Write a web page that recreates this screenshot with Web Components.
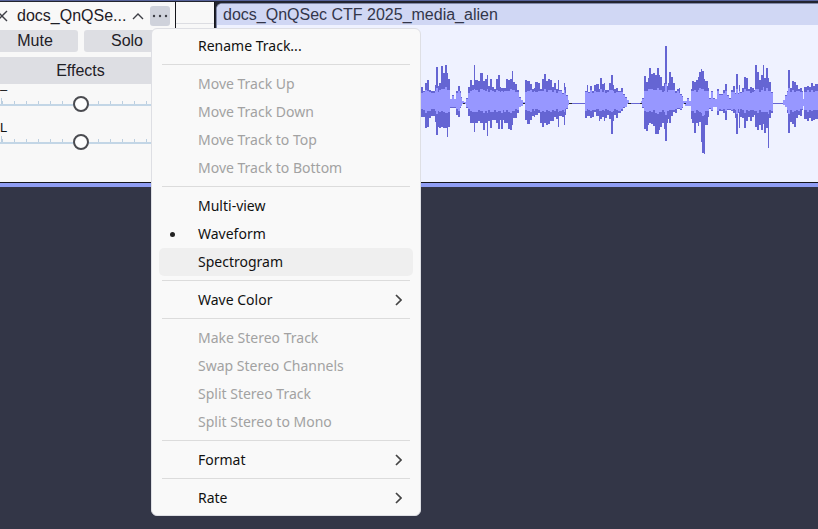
<!DOCTYPE html>
<html lang="en">
<head>
<meta charset="utf-8">
<title>Track menu</title>
<style>
  html, body { height: 100%; }
  body { margin: 0; background: #333647; overflow: hidden; font-family: "Liberation Sans", Arial, sans-serif; font-size: 16px; color: #1f2026; }
</style>
</head>
<body>
<audio-editor></audio-editor>
<script>
class ShadowElement extends HTMLElement {
  constructor() {
    super();
    this.attachShadow({ mode: "open" }).innerHTML = this.render();
  }
  render() { return ""; }
}

/* x, peak above the centre line, peak below it */
const PEAKS = `421,16,14 423,12,14 425,20,25 427,23,24 429,13,15 431,12,13 435,18,19 436,36,32 438,17,24 439,20,25 441,37,24 443,30,25 445,38,25 447,30,34 448,24,24 450,4,5 452,8,5 454,4,5 456,12,12 458,17,14 460,12,5 461,6,3 462,2,1 464,1,1 466,5,5 468,16,13 470,23,20 472,18,20 474,38,29 475,23,20 478,22,18 480,30,20 483,22,27 485,24,20 487,28,33 488,17,18 490,24,25 492,16,17 494,14,17 496,24,20 498,28,26 500,16,17 501,15,26 503,15,17 504,15,20 506,24,20 508,23,26 510,24,27 512,32,22 513,21,15 515,19,15 517,13,10 519,6,4 521,3,3 523,1,1 525,23,17 527,22,21 530,19,17 532,14,13 534,15,14 535,21,12 538,20,10 540,14,20 542,24,24 544,29,20 546,22,22 548,24,21 550,23,18 552,16,18 554,20,14 556,14,16 558,23,24 559,13,13 562,10,14 564,20,22 565,16,12 566,8,6 568,3,2 569,0,1 585,12,15 587,18,13 588,11,13 590,17,15 592,12,14 594,18,9 596,19,13 599,14,18 600,25,16 602,19,14 604,20,18 605,13,15 607,13,12 609,20,16 611,28,31 613,18,18 614,14,12 616,15,15 618,12,10 621,15,8 623,9,5 625,6,4 627,3,1 629,0,1 641,2,1 642,5,5 644,27,26 646,21,28 648,25,22 649,35,20 651,29,21 653,30,23 655,28,31 657,35,31 659,28,27 660,26,24 662,17,20 664,20,26 665,57,38 667,17,20 668,20,16 669,31,20 671,26,13 673,20,9 675,12,10 677,14,6 679,15,6 680,9,7 682,7,5 683,2,1 685,2,3 687,5,3 689,2,3 691,14,16 692,22,20 694,21,30 696,23,20 698,26,23 699,31,19 701,34,39 702,32,50 704,24,51 705,22,22 708,15,14 709,5,6 711,12,8 713,5,4 715,4,4 717,14,12 719,9,8 721,9,8 723,13,10 725,19,17 727,8,7 729,5,7 731,13,8 733,17,10 735,10,15 736,29,31 738,10,10 739,18,25 740,11,14 742,15,15 744,26,25 746,25,18 748,14,14 750,16,18 752,15,14 754,13,12 755,38,24 757,31,27 759,23,22 761,28,27 763,38,21 764,25,30 766,35,25 768,25,45 769,21,15 771,11,10 773,0,1 783,3,2 785,8,4 787,12,10 788,33,30 790,15,19 792,22,21 794,21,24 796,18,15 798,14,12 800,15,13 802,12,7 803,4,3 804,16,16 807,17,18 809,16,15 811,20,18 813,17,17 815,19,16`
  .split(/\s+/).map(p => p.split(",").map(Number));

customElements.define("wave-form", class extends ShadowElement {
  render() {
    const mid = 78, left = 217, right = 818;
    const outline = limit => {
      let top = `M${PEAKS[0][0] - left} ${mid}`, back = "";
      PEAKS.forEach(([x, up, down], i) => {
        const a = x - left, b = (PEAKS[i + 1] ? PEAKS[i + 1][0] : right) - left;
        top += `V${mid - limit(up, 9, i)}H${b}`;
        back = `H${b}V${mid + limit(down, 5, i)}H${a}` + back;
      });
      return top + back + "Z";
    };
    const loudness = (v, base, i) => v < 5 ? v : Math.min(v - 1, Math.round(base + v * 0.15 + (i * 7 % 5) / 2 - 1));
    return `
      <style>
        :host { display: block; background: #eff2ff; }
        svg { display: block; width: 100%; height: 157px; }
      </style>
      <svg viewBox="0 0 601 157" preserveAspectRatio="none" role="img" aria-label="Waveform">
        <path fill="#6565d3" d="${outline(v => v)}"/>
        <path fill="#9797ff" d="${outline(loudness)}"/>
        <path stroke="#6565d3" d="M352 78.500h16M411 78.500h13M556 78.500h10"/>
        <path stroke="#22232c" d="M246 78.500h2M306 78.500h2M352 78.500h3M411 78.500h3M423 78.500h2M467 78.500h2"/>
      </svg>`;
  }
});

customElements.define("audio-clip", class extends ShadowElement {
  render() {
    return `
      <style>
        :host { display: flex; flex-direction: column; min-width: 0; border-top: 1px solid #8088a8; border-left: 1px solid #8088a8; border-radius: 6px 0 0 0; overflow: hidden; background: #eff2ff; }
        header { height: 21px; line-height: 21px; padding-left: 6px; background: #d0d7f4; color: #33364a; white-space: nowrap; overflow: hidden; }
      </style>
      <header><slot name="name"></slot></header>
      <slot></slot>`;
  }
});

customElements.define("tick-slider", class extends ShadowElement {
  render() {
    const name = this.getAttribute("name") || "", mark = this.getAttribute("mark") || "";
    return `
      <style>
        :host { display: block; height: 38px; }
        label { display: block; height: 12px; font-size: 13px; line-height: 12px; color: #111; }
        .rail { height: 16px; background:
          linear-gradient(#c3d6e6, #c3d6e6) 0 8px / 100% 2px no-repeat,
          repeating-linear-gradient(90deg, transparent 0 1px, #bccfe0 1px 2px, transparent 2px 12px) 1px 5px / 100% 3px no-repeat,
          linear-gradient(#bccfe0, #bccfe0) 1px 2px / 1px 6px no-repeat; }
        input { appearance: none; display: block; margin: 0; width: 162px; height: 16px; background: none; }
        input::-webkit-slider-thumb { appearance: none; box-sizing: border-box; width: 16px; height: 16px; border: 2px solid #4a4b50; border-radius: 50%; background: #fdfdfd; }
      </style>
      <label for="s" aria-label="${name}">${mark}</label>
      <div class="rail"><input id="s" type="range" aria-label="${name}" min="0" max="100" value="50"></div>`;
  }
});

customElements.define("track-panel", class extends ShadowElement {
  render() {
    return `
      <style>
        :host { display: flex; flex-direction: column; background: #f8f8f8; overflow: hidden; }
        button { border: 0; padding: 0; margin: 0; font: inherit; color: inherit; background: none; }
        svg { display: block; fill: none; stroke: #3d3e45; }
        .title { display: flex; align-items: center; height: 28px; padding-right: 5px; }
        .name { margin-left: 9px; flex: 1; white-space: nowrap; }
        .more { margin-left: 6px; width: 20px; height: 20px; border-radius: 3px; background: #cfd2db; }
        .row { display: grid; grid-template-columns: 78px 86px; gap: 6px; height: 22px; }
        .row button { background: #dddee3; border-radius: 0 3px 3px 0; }
        .row button:first-child { padding-right: 8px; }
        .row button + button { border-radius: 3px; }
        .effects { margin: 5px 5px 0 0; height: 27px; background: #dddee3; padding-right: 9px; flex: none; }
      </style>
      <div class="title">
        <button aria-label="Close track"><svg width="8" height="12" viewBox="0 0 8 12" stroke-width="1.400"><path d="M-3 1L7 11M7 1L-3 11"/></svg></button>
        <span class="name">docs_QnQSe...</span>
        <button aria-label="Collapse"><svg width="12" height="10" viewBox="0 0 12 10" stroke-width="1.400"><path d="M1 8L6 3L11 8"/></svg></button>
        <button class="more" aria-label="Track options"><svg width="20" height="20" viewBox="0 0 20 20" style="fill:#3d3e45;stroke:none"><circle cx="4" cy="10" r="1.200"/><circle cx="10" cy="10" r="1.200"/><circle cx="16" cy="10" r="1.200"/></svg></button>
      </div>
      <div class="row"><button>Mute</button><button>Solo</button></div>
      <button class="effects">Effects</button>
      <tick-slider name="Volume" mark="–"></tick-slider>
      <tick-slider name="Pan" mark="L"></tick-slider>`;
  }
});

customElements.define("menu-item", class extends ShadowElement {
  render() {
    const off = this.hasAttribute("disabled") ? "disabled" : "";
    const radio = this.hasAttribute("radio");
    return `
      <style>
        :host { display: block; }
        button { display: flex; align-items: center; box-sizing: border-box; width: 100%; height: 28px; border: 0; padding: 0 11px 0 7px; border-radius: 5px; background: none; font: inherit; color: #111; text-align: left; }
        button:disabled { color: #a2a2a2; }
        :host([current]) button { background: #efefef; }
        .mark { width: 32px; display: flex; }
        .mark i { width: 5px; height: 5px; margin-left: 4px; border-radius: 50%; background: #222; }
        .label { flex: 1; white-space: nowrap; }
        svg { fill: none; stroke: #444; stroke-width: 1.700; }
      </style>
      <button role="${radio ? "menuitemradio" : "menuitem"}" ${off}>
        <span class="mark">${this.hasAttribute("checked") ? "<i></i>" : ""}</span>
        <span class="label"><slot></slot></span>
        ${this.hasAttribute("submenu") ? '<svg width="8" height="12" viewBox="0 0 8 12"><path d="M2 1L7 6L2 11"/></svg>' : ""}
      </button>`;
  }
});

customElements.define("menu-rule", class extends ShadowElement {
  render() {
    return `<style>:host { display: block; height: 1px; margin: 4px 3px 5px; background: #dcdcdc; }</style>`;
  }
});

customElements.define("context-menu", class extends ShadowElement {
  render() {
    return `
      <style>
        :host { display: block; box-sizing: border-box; width: 270px; padding: 3px 7px; border: 1px solid #dedfe4; border-radius: 6px; background: #f9f9f9; font-family: "Noto Sans", sans-serif; font-size: 14px; line-height: 20px; }
      </style>
      <div role="menu"><slot></slot></div>`;
  }
});

customElements.define("audio-editor", class extends ShadowElement {
  render() {
    const item = (text, attrs = "") => `<menu-item ${attrs}>${text}</menu-item>`;
    const off = text => item(text, "disabled");
    return `
      <style>
        :host { display: block; position: relative; min-height: 100%; border-top: 1px solid #56629a; box-sizing: border-box; }
        .track { display: grid; grid-template-columns: 175px 38px 1fr; column-gap: 1px; height: 181px; background: #14151b; border-top: 1px solid #22242f; border-bottom: 4px solid #8f9df3; box-sizing: content-box; }
        track-panel, .ruler { height: 180px; background: #f8f8f8; }
        .ruler::before { content: ""; display: block; height: 21px; border-bottom: 1px solid #dcdde2; }
        .lane { display: grid; min-width: 0; padding-left: 1px; padding-top: 1px; height: 179px; background: #22242f; }
        context-menu { position: absolute; left: 151px; top: 27px; }
      </style>
      <div class="track">
        <track-panel></track-panel>
        <div class="ruler"></div>
        <div class="lane"><audio-clip><span slot="name">docs_QnQSec CTF 2025_media_alien</span><wave-form></wave-form></audio-clip></div>
      </div>
      <context-menu>
        ${item("Rename Track...")}
        <menu-rule></menu-rule>
        ${["Move Track Up", "Move Track Down", "Move Track to Top", "Move Track to Bottom"].map(off).join("")}
        <menu-rule></menu-rule>
        ${item("Multi-view")}${item("Waveform", "radio checked")}${item("Spectrogram", "radio current")}
        <menu-rule></menu-rule>
        ${item("Wave Color", "submenu")}
        <menu-rule></menu-rule>
        ${["Make Stereo Track", "Swap Stereo Channels", "Split Stereo Track", "Split Stereo to Mono"].map(off).join("")}
        <menu-rule></menu-rule>
        ${item("Format", "submenu")}
        <menu-rule></menu-rule>
        ${item("Rate", "submenu")}
      </context-menu>`;
  }
});
</script>
</body>
</html>
